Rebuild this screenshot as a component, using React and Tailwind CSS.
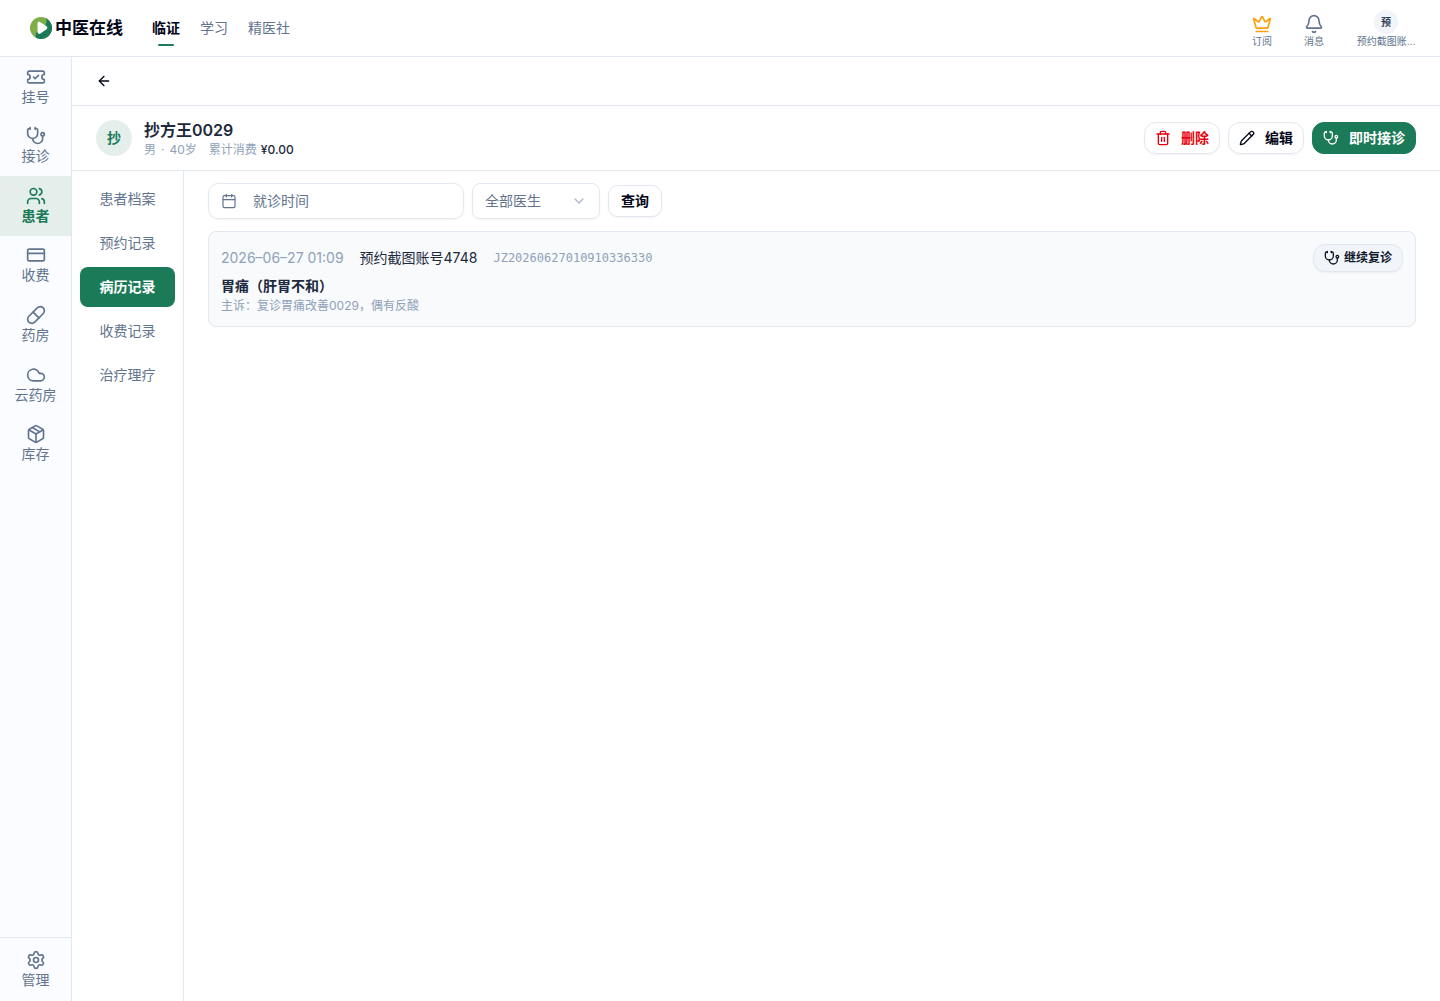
import React, { useState } from 'react';
import {
  ArrowLeft,
  Bell,
  Calendar,
  ChevronDown,
  Cloud,
  CreditCard,
  Crown,
  Package,
  Pencil,
  Pill,
  Settings,
  Stethoscope,
  TicketCheck,
  Trash2,
  Users,
} from 'lucide-react';

const topTabs = ['临证', '学习', '精医社'];

const sideItems = [
  { label: '挂号', icon: TicketCheck },
  { label: '接诊', icon: Stethoscope },
  { label: '患者', icon: Users },
  { label: '收费', icon: CreditCard },
  { label: '药房', icon: Pill },
  { label: '云药房', icon: Cloud },
  { label: '库存', icon: Package },
];

const patientTabs = ['患者档案', '预约记录', '病历记录', '收费记录', '治疗理疗'];

const records = [
  {
    id: 'JZ20260627010910336330',
    time: '2026–06–27 01:09',
    doctor: '预约截图账号4748',
    diagnosis: '胃痛（肝胃不和）',
    complaint: '主诉：复诊胃痛改善0029，偶有反酸',
  },
];

const Logo = () => (
  <svg width="22" height="22" viewBox="0 0 22 22" aria-hidden="true">
    <circle cx="11" cy="11" r="11" fill="#7fae48" />
    <path d="M16 1.200A11 11 0 1 1 6 20.800c-.6-2.600 0-5 1.500-6.800L15 9c1.500-2.500 2-5 1-7.800z" fill="#1b7a57" />
    <path d="M7.500 6.500c0-1.500 1.300-2.200 2.500-1.500l6.500 4.300c1.100.8 1.100 2.200 0 3L10.500 16.500c-1.300.8-3 0-3-1.500z" fill="#fff" />
    <circle cx="11" cy="19" r=".5" fill="#0b5238" />
    <circle cx="15" cy="17.500" r=".5" fill="#0b5238" />
  </svg>
);

const Header = () => (
  <header className="flex h-[57px] shrink-0 items-center justify-between border-b border-slate-200 pr-6 pl-[30px]">
    <div className="flex h-full items-center">
      <a href="#home" className="flex items-center gap-[3px]">
        <Logo />
        <span className="text-[17px] leading-6 font-semibold text-slate-950">中医在线</span>
      </a>
      <nav className="ml-[29px] flex gap-5">
        {topTabs.map((tab, index) => (
          <a
            key={tab}
            href={`#top-${index}`}
            className={`relative text-sm leading-5 ${index === 0 ? 'font-semibold text-slate-950' : 'text-slate-500'}`}
          >
            {tab}
            {index === 0 && <span className="absolute -bottom-2 left-1/2 h-0.5 w-4 -translate-x-1/2 rounded-full bg-[#1b7a57]" />}
          </a>
        ))}
      </nav>
    </div>
    <div className="flex items-end text-[10px] leading-3 text-slate-500">
      <button type="button" className="flex w-[52px] flex-col items-center gap-px">
        <Crown size={20} className="text-[#ff9f0a]" />
        订阅
      </button>
      <button type="button" className="flex w-[52px] flex-col items-center gap-px">
        <Bell size={20} />
        消息
      </button>
      <button type="button" className="ml-4 flex w-[60px] flex-col items-center gap-px">
        <span className="flex size-6 items-center justify-center rounded-full bg-slate-100 font-semibold text-slate-700">预</span>
        <span className="whitespace-nowrap">预约截图账...</span>
      </button>
    </div>
  </header>
);

const Sidebar = () => (
  <aside className="flex w-[72px] shrink-0 flex-col justify-between border-r border-slate-200 bg-[#fafcff]">
    <nav className="grid h-[417px] auto-rows-fr">
      {sideItems.map(({ label, icon: Icon }) => (
        <a
          key={label}
          href={`#${label}`}
          className={`flex flex-col items-center justify-center text-sm leading-5 ${label === '患者' ? 'bg-[#e4efec] font-semibold text-[#1b7a57]' : 'text-slate-500'}`}
        >
          <Icon size={20} />
          {label}
        </a>
      ))}
    </nav>
    <a href="#manage" className="flex h-16 flex-col items-center justify-center border-t border-slate-200 text-sm leading-5 text-slate-500">
      <Settings size={20} />
      管理
    </a>
  </aside>
);

const PatientBar = () => (
  <div className="flex h-[65px] shrink-0 items-center justify-between border-b border-slate-200 px-6">
    <div className="flex items-center gap-3">
      <div className="flex size-9 items-center justify-center rounded-full bg-[#e4efec] text-sm font-semibold text-[#1b7a57]">抄</div>
      <div className="pt-1">
        <h1 className="text-base leading-5 font-semibold text-slate-800">抄方王0029</h1>
        <p className="flex text-xs leading-5 text-slate-400">
          <span>男</span>
          <span className="mx-[5px]">·</span>
          <span>40岁</span>
          <span className="ml-3">累计消费</span>
          <span className="ml-1 font-medium text-slate-800">¥0.00</span>
        </p>
      </div>
    </div>
    <div className="flex gap-2 text-sm font-semibold">
      <button type="button" className="flex h-8 items-center gap-2.5 rounded-xl border border-slate-200 px-2.5 text-[#e7000b] shadow-xs">
        <Trash2 size={16} /> 删除
      </button>
      <button type="button" className="flex h-8 items-center gap-2.5 rounded-xl border border-slate-200 px-2.5 text-slate-950 shadow-xs">
        <Pencil size={16} /> 编辑
      </button>
      <button type="button" className="flex h-8 items-center gap-2.5 rounded-xl border border-[#1b7a57] bg-[#1b7a57] px-2.5 text-white">
        <Stethoscope size={16} /> 即时接诊
      </button>
    </div>
  </div>
);

const RecordCard = ({ record }) => (
  <article className="mt-3 rounded-lg border border-slate-200 bg-slate-50 px-3 pt-3 pb-2.5">
    <div className="flex h-7 items-center justify-between">
      <div className="flex items-center gap-4 text-sm">
        <time className="text-slate-400">{record.time}</time>
        <span className="text-slate-800">{record.doctor}</span>
        <span className="font-['DejaVu_Sans_Mono','Liberation_Mono',monospace] text-xs text-slate-400">{record.id}</span>
      </div>
      <button type="button" className="flex h-7 items-center gap-1 rounded-xl border border-slate-200 bg-slate-100 px-2.5 text-xs font-semibold text-slate-900 shadow-xs">
        <Stethoscope size={16} /> 继续复诊
      </button>
    </div>
    <h2 className="mt-1 text-sm leading-5 font-semibold text-slate-800">{record.diagnosis}</h2>
    <p className="text-xs leading-5 text-slate-400">{record.complaint}</p>
  </article>
);

const App = () => {
  const [activeTab, setActiveTab] = useState('病历记录');
  const [visitTime, setVisitTime] = useState('');

  return (
    <div className="flex min-h-screen flex-col bg-white font-['Inter','Noto_Sans_CJK_SC',sans-serif] text-slate-800">
      <Header />
      <div className="flex flex-1">
        <Sidebar />
        <main className="flex min-w-0 flex-1 flex-col">
          <div className="flex h-[49px] shrink-0 items-center border-b border-slate-200 px-6">
            <button type="button" aria-label="返回" className="text-slate-950">
              <ArrowLeft size={16} />
            </button>
          </div>
          <PatientBar />
          <div className="flex flex-1">
            <nav className="flex w-28 shrink-0 flex-col gap-1 border-r border-slate-200 p-2">
              {patientTabs.map((tab) => (
                <button
                  key={tab}
                  type="button"
                  onClick={() => setActiveTab(tab)}
                  className={`h-10 rounded-lg text-sm ${tab === activeTab ? 'bg-[#1b7a57] font-semibold text-white' : 'text-slate-500'}`}
                >
                  {tab}
                </button>
              ))}
            </nav>
            <section className="min-w-0 flex-1 px-6 py-3">
              <form onSubmit={(e) => e.preventDefault()} className="flex items-center gap-2">
                <label className="flex h-9 w-64 items-center gap-4 rounded-[10px] border border-slate-200 px-3 text-slate-500 shadow-xs">
                  <Calendar size={16} strokeWidth={1.75} className="shrink-0" />
                  <input
                    aria-label="就诊时间"
                    placeholder="就诊时间"
                    value={visitTime}
                    onChange={(e) => setVisitTime(e.target.value)}
                    className="min-w-0 flex-1 text-sm outline-none placeholder:text-slate-500"
                  />
                </label>
                <div className="grid w-32 items-center">
                  <select aria-label="医生" className="col-start-1 row-start-1 h-9 w-full appearance-none rounded-lg border border-slate-200 px-3 text-sm text-slate-500 shadow-xs">
                    <option>全部医生</option>
                  </select>
                  <ChevronDown size={16} className="pointer-events-none col-start-1 row-start-1 mr-[13px] justify-self-end text-slate-500 opacity-50" />
                </div>
                <button type="submit" className="h-8 rounded-[10px] border border-slate-200 px-3 text-sm font-semibold text-slate-950 shadow-xs">
                  查询
                </button>
              </form>
              {records.map((record) => (
                <RecordCard key={record.id} record={record} />
              ))}
            </section>
          </div>
        </main>
      </div>
    </div>
  );
};

export default App;
